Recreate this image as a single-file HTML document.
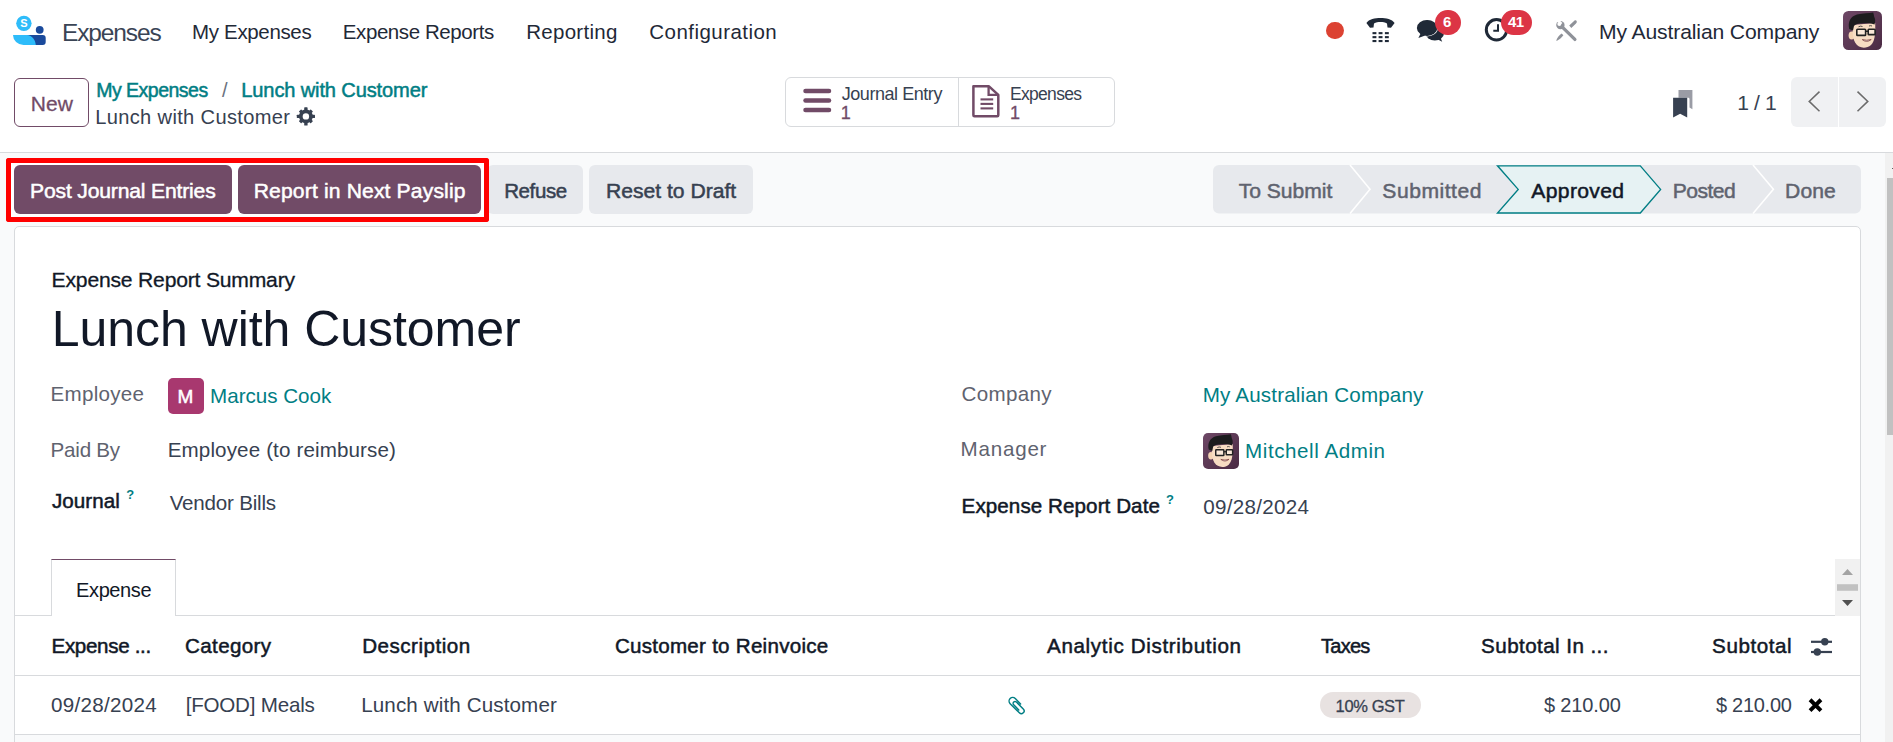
<!DOCTYPE html>
<html><head><meta charset="utf-8"><style>
html,body{margin:0;padding:0;}
body{width:1893px;height:742px;overflow:hidden;position:relative;background:#f9fafb;font-family:"Liberation Sans",sans-serif;}
.t{position:absolute;white-space:pre;line-height:1;font-family:"Liberation Sans",sans-serif;}
.a{position:absolute;box-sizing:border-box;}
</style></head><body>
<!-- top white area -->
<div class="a" style="left:0;top:0;width:1893px;height:152px;background:#fff"></div>
<div class="a" style="left:0;top:152px;width:1893px;height:1px;background:#d8dadd"></div>
<!-- logo -->
<svg class="a" style="left:0;top:0" width="60" height="60" viewBox="0 0 60 60">
 <circle cx="23.9" cy="23.35" r="7.7" fill="#2ebcfa"/>
 <text x="23.9" y="27.4" font-family="Liberation Sans" font-weight="700" font-size="11" fill="#fff" text-anchor="middle">S</text>
 <circle cx="39.7" cy="29.8" r="3.9" fill="#1a4a9c"/>
 <path d="M13,35 H37 V45 H23.5 A10.5,10 0 0 1 13,35 Z" fill="#2ebcfa"/>
 <path d="M27,35 H42.7 A3,3 0 0 1 45.7,38 V42 A3,3 0 0 1 42.7,45 H35.8 C35.5,40 32,35.2 27,35 Z" fill="#1a4a9c"/>
</svg>
<!-- red dot -->
<div class="a" style="left:1326.3px;top:21.5px;width:17.6px;height:17.6px;border-radius:50%;background:#dc4232"></div>
<!-- phone -->
<svg class="a" style="left:1360px;top:10px" width="40" height="40" viewBox="0 0 40 40">
 <path d="M6.4,13 C9,9 15,8 20.5,8 C26,8 32,9 34.6,13 L31,17.8 L27.5,17.5 L27,13.5 C25,12.3 23,12 20.5,12 C18,12 16,12.3 14,13.5 L13.5,17.5 L10,17.8 Z" fill="#1f2937"/>
 <g fill="#1f2937">
  <rect x="12.5" y="22.1" width="3.9" height="2.1"/><rect x="18.6" y="22.1" width="3.9" height="2.1"/><rect x="24.9" y="22.1" width="3.9" height="2.1"/>
  <rect x="12.5" y="26.1" width="3.9" height="2.1"/><rect x="18.6" y="26.1" width="3.9" height="2.1"/><rect x="24.9" y="26.1" width="3.9" height="2.1"/>
  <rect x="12.5" y="30.0" width="3.9" height="2.1"/><rect x="18.6" y="30.0" width="3.9" height="2.1"/><rect x="24.9" y="30.0" width="3.9" height="2.1"/>
 </g>
</svg>
<!-- chat -->
<svg class="a" style="left:1410px;top:10px" width="40" height="40" viewBox="0 0 40 40">
 <ellipse cx="24.8" cy="22.8" rx="9.3" ry="7.6" fill="#1f2937"/>
 <path d="M26,28.5 L32.2,31.8 L30,26.5 Z" fill="#1f2937"/>
 <ellipse cx="17.1" cy="17.9" rx="10.2" ry="8" fill="#1f2937" stroke="#fff" stroke-width="1.3"/>
 <path d="M10.6,23.6 L8.4,28.1 L15.2,25.6 Z" fill="#1f2937"/>
 <ellipse cx="17.1" cy="17.9" rx="10.2" ry="8" fill="#1f2937"/>
</svg>
<div class="a" style="left:1435.2px;top:10px;width:25.6px;height:25.4px;border-radius:13px;background:#dc3545;border:0"></div>
<div class="t" style="left:1443px;top:13.5px;font-size:15px;font-weight:700;color:#fff">6</div>
<!-- clock -->
<svg class="a" style="left:1480px;top:10px" width="40" height="40" viewBox="0 0 40 40">
 <circle cx="16.5" cy="19.8" r="10.2" fill="none" stroke="#1f2937" stroke-width="3"/>
 <path d="M18,14.2 V20.8 H13.3" fill="none" stroke="#1f2937" stroke-width="2"/>
</svg>
<div class="a" style="left:1500.6px;top:10.2px;width:31.4px;height:25.3px;border-radius:13px;background:#dc3545"></div>
<div class="t" style="left:1508px;top:13.8px;font-size:15px;font-weight:700;color:#fff;letter-spacing:-0.5px">41</div>
<!-- tools -->
<svg class="a" style="left:1550px;top:15px" width="32" height="32" viewBox="0 0 32 32">
 <g fill="#8f9299" stroke="none">
  <circle cx="10.4" cy="10.1" r="4.2"/>
  <line x1="10.8" y1="10.6" x2="24.9" y2="24.4" stroke="#8f9299" stroke-width="3.3" stroke-linecap="round"/>
  <path d="M19.2,10.6 L24.3,5.8 C25.2,5 26.4,5.2 26.7,6.2 C27,7 26.6,7.8 26,8.4 L21.3,12.9 Z"/>
  <path d="M11.6,18.5 L13.4,20.2 C11.5,22.8 9,25 6.1,25.9 C7,22.9 9,20.4 11.6,18.5 Z"/>
 </g>
 <circle cx="9.3" cy="8.9" r="2.0" fill="#fff"/>
 <path d="M9.6,8.2 L6.5,5.1 L10.5,4.7 Z" fill="#fff"/>
 <rect x="8.4" y="4.6" width="2.6" height="5" fill="#fff" transform="rotate(-45 9.7 7.1)"/>
</svg>
<!-- company avatar -->
<svg class="a" style="left:1843px;top:11px" width="39" height="39" viewBox="0 0 39 39">
 <defs><linearGradient id="ag" x1="0" y1="0" x2="1" y2="1"><stop offset="0" stop-color="#6e4866"/><stop offset="1" stop-color="#4a2a43"/></linearGradient></defs>
 <rect width="39" height="39" rx="5.5" fill="url(#ag)"/>
 <ellipse cx="8.6" cy="24.6" rx="3" ry="4" fill="#f3d2b3"/>
 <path d="M9.6,14 C9.2,24 10,32 16,35.6 C19.5,37.4 24.5,37.2 28,34 C31.5,30.5 32.6,24 32.2,12 Z" fill="#f7dcc3"/>
 <path d="M6.2,18 C4.6,11 7.5,5.5 14,3.6 C20,2 26,2.2 30.2,1.4 C31,3.5 30.8,5.2 31.5,6.5 C32.5,8.5 32.3,11 31.5,13.5 C29,12.3 26,12 22,12.2 C17,12.5 13,12.2 11,15 L10,19.5 Z" fill="#1c1c1e"/>
 <rect x="13.8" y="18.2" width="8.8" height="6.2" rx="0.7" fill="#fff" fill-opacity="0.35" stroke="#222" stroke-width="1.6"/>
 <rect x="25.2" y="18.2" width="6.9" height="5.4" rx="0.7" fill="#fff" fill-opacity="0.35" stroke="#222" stroke-width="1.6"/>
 <path d="M22.6,20.3 H25.2" stroke="#222" stroke-width="1.4"/>
 <path d="M15.5,15.8 Q17.5,14.6 19.5,15.5 M26,15 Q27.5,14.3 29,15" stroke="#3a3a3a" stroke-width="0.9" fill="none"/>
 <path d="M19.3,28.6 Q23.8,32.2 28.2,28.5 Q23.8,30 19.3,28.6 Z" fill="#fff" stroke="#7a3b3b" stroke-width="0.8"/>
</svg>
<!-- New button -->
<div class="a" style="left:14px;top:78px;width:75px;height:49px;border:1px solid #714b67;border-radius:6px;background:#fff"></div>
<!-- gear -->
<svg class="a" style="left:296px;top:106px" width="20" height="21" viewBox="0 0 20 21">
 <g transform="translate(9.9,10.4)">
  <g fill="#374151">
   <circle r="6.9"/>
   <rect x="-1.7" y="-9.1" width="3.4" height="18.2" rx="0.6"/>
   <rect x="-1.7" y="-8.4" width="3.4" height="16.8" rx="0.6" transform="rotate(45)"/>
   <rect x="-1.7" y="-9.1" width="3.4" height="18.2" rx="0.6" transform="rotate(90)"/>
   <rect x="-1.7" y="-8.4" width="3.4" height="16.8" rx="0.6" transform="rotate(135)"/>
  </g>
  <circle r="3.2" fill="#fff"/>
 </g>
</svg>
<!-- stat buttons -->
<div class="a" style="left:785px;top:77px;width:330px;height:50px;border:1px solid #d8dadd;border-radius:6px;background:#fff"></div>
<div class="a" style="left:958px;top:78px;width:1px;height:48px;background:#d8dadd"></div>
<svg class="a" style="left:800px;top:85px" width="36" height="32" viewBox="0 0 36 32">
 <g stroke="#714b67" stroke-width="4.5" stroke-linecap="round">
  <line x1="5.5" y1="6.1" x2="29" y2="6.1"/><line x1="5.5" y1="15.5" x2="29" y2="15.5"/><line x1="5.5" y1="24.9" x2="29" y2="24.9"/>
 </g>
</svg>
<svg class="a" style="left:968px;top:82px" width="36" height="38" viewBox="0 0 36 38">
 <path d="M5.4,4.3 H21 L30.3,12.8 V33.2 C30.3,33.8 29.9,34.2 29.3,34.2 H6.4 C5.8,34.2 5.4,33.8 5.4,33.2 Z" fill="none" stroke="#714b67" stroke-width="2.5" stroke-linejoin="round"/>
 <path d="M20.6,4.5 V12.9 H30.1" fill="none" stroke="#714b67" stroke-width="2.3"/>
 <g stroke="#714b67" stroke-width="2.1"><line x1="12.5" y1="17.4" x2="25.2" y2="17.4"/><line x1="12.5" y1="21.9" x2="25.2" y2="21.9"/><line x1="12.5" y1="26.4" x2="25.2" y2="26.4"/></g>
</svg>
<!-- bookmark -->
<svg class="a" style="left:1670px;top:88px" width="26" height="32" viewBox="0 0 26 32">
 <path d="M8.5,2 H22.4 V21.3 L19.5,19.5 V11 C19.5,10 18.8,9.7 18,9.7 H8.5 Z" fill="#9a9ca5"/>
 <path d="M3.1,9.7 H17.2 V29.6 L10.15,25.8 L3.1,29.6 Z" fill="#374151"/>
</svg>
<!-- pager -->
<div class="a" style="left:1791px;top:77px;width:95px;height:50px;border-radius:6px;background:#f0f1f3"></div>
<div class="a" style="left:1838px;top:77px;width:1px;height:50px;background:#fff"></div>
<svg class="a" style="left:1800px;top:85px" width="80" height="34" viewBox="0 0 80 34">
 <path d="M19.5,6.6 L9.2,16.4 L19.5,26.2" fill="none" stroke="#6b6b6b" stroke-width="1.5"/>
 <path d="M57.5,6.6 L67.8,16.4 L57.5,26.2" fill="none" stroke="#6b6b6b" stroke-width="1.5"/>
</svg>
<!-- status buttons -->
<div class="a" style="left:6px;top:158px;width:483px;height:64px;border:5px solid #ff0000;border-radius:3px;background:#fff"></div>
<div class="a" style="left:487px;top:165px;width:96px;height:49px;border-radius:6px;background:#e7e9ed"></div>
<div class="a" style="left:6px;top:158px;width:483px;height:64px;border:5px solid #ff0000;border-radius:3px"></div>
<div class="a" style="left:14px;top:165px;width:218px;height:49px;border-radius:6px;background:#714b67"></div>
<div class="a" style="left:238px;top:165px;width:243px;height:49px;border-radius:6px;background:#714b67"></div>
<div class="a" style="left:589px;top:165px;width:164px;height:49px;border-radius:6px;background:#e7e9ed"></div>
<!-- statusbar -->
<svg class="a" style="left:1200px;top:160px" width="670" height="60" viewBox="0 0 670 60">
 <rect x="13" y="5" width="648" height="48.5" rx="6" fill="#e7e9ed"/>
 <path d="M150,5 L170,29.2 L150,53.5" fill="none" stroke="#fff" stroke-width="1.6"/>
 <path d="M553,5 L573.4,29.2 L553,53.5" fill="none" stroke="#fff" stroke-width="1.6"/>
 <path d="M297.5,5.8 H440.3 L460.6,29.4 L440.3,53.0 H297.5 L318.2,29.4 Z" fill="#e6f2f3" stroke="#017e84" stroke-width="1.35"/>
</svg>
<!-- sheet -->
<div class="a" style="left:14px;top:226px;width:1847px;height:600px;border:1px solid #d8dadd;border-radius:5px;background:#fff"></div>
<!-- M avatar -->
<div class="a" style="left:168.3px;top:378.2px;width:35.6px;height:35.6px;border-radius:5px;background:#a8386f"></div>
<!-- Mitchell avatar -->
<svg class="a" style="left:1203px;top:433px" width="36" height="36" viewBox="0 0 39 39">
 <rect width="39" height="39" rx="5.5" fill="url(#ag)"/>
 <ellipse cx="8.6" cy="24.6" rx="3" ry="4" fill="#f3d2b3"/>
 <path d="M9.6,14 C9.2,24 10,32 16,35.6 C19.5,37.4 24.5,37.2 28,34 C31.5,30.5 32.6,24 32.2,12 Z" fill="#f7dcc3"/>
 <path d="M6.2,18 C4.6,11 7.5,5.5 14,3.6 C20,2 26,2.2 30.2,1.4 C31,3.5 30.8,5.2 31.5,6.5 C32.5,8.5 32.3,11 31.5,13.5 C29,12.3 26,12 22,12.2 C17,12.5 13,12.2 11,15 L10,19.5 Z" fill="#1c1c1e"/>
 <rect x="13.8" y="18.2" width="8.8" height="6.2" rx="0.7" fill="#fff" fill-opacity="0.35" stroke="#222" stroke-width="1.6"/>
 <rect x="25.2" y="18.2" width="6.9" height="5.4" rx="0.7" fill="#fff" fill-opacity="0.35" stroke="#222" stroke-width="1.6"/>
 <path d="M22.6,20.3 H25.2" stroke="#222" stroke-width="1.4"/>
 <path d="M15.5,15.8 Q17.5,14.6 19.5,15.5 M26,15 Q27.5,14.3 29,15" stroke="#3a3a3a" stroke-width="0.9" fill="none"/>
 <path d="M19.3,28.6 Q23.8,32.2 28.2,28.5 Q23.8,30 19.3,28.6 Z" fill="#fff" stroke="#7a3b3b" stroke-width="0.8"/>
</svg>
<!-- notebook -->
<div class="a" style="left:15px;top:615px;width:1820px;height:1px;background:#d8dadd"></div>
<div class="a" style="left:51px;top:559px;width:125px;height:57px;border:1px solid #d8dadd;border-top-color:#714b67;border-bottom:0;background:#fff"></div>
<div class="a" style="left:1835px;top:559px;width:25px;height:57px;background:#f1f1f1"></div>
<svg class="a" style="left:1835px;top:559px" width="25" height="57" viewBox="0 0 25 57">
 <path d="M7,16 L12.5,10 L18,16 Z" fill="#a3a3a3"/>
 <rect x="2" y="25.2" width="21" height="6.6" fill="#c1c1c1"/>
 <path d="M7,41 L12.5,47 L18,41 Z" fill="#505050"/>
</svg>
<!-- table -->
<div class="a" style="left:15px;top:675px;width:1845px;height:1px;background:#d8dadd"></div>
<div class="a" style="left:15px;top:734px;width:1845px;height:1px;background:#d8dadd"></div>
<div class="a" style="left:15px;top:735px;width:1845px;height:10px;background:#f9fafb"></div>
<svg class="a" style="left:1805px;top:635px" width="32" height="25" viewBox="0 0 32 25">
 <g stroke="#374151" stroke-width="2.2"><line x1="6" y1="6.8" x2="27" y2="6.8"/><line x1="6" y1="17" x2="27" y2="17"/></g>
 <circle cx="19.8" cy="6.8" r="3.7" fill="#374151"/><circle cx="12.3" cy="17" r="3.7" fill="#374151"/>
</svg>
<svg class="a" style="left:1004.7px;top:693.6px" width="24" height="24" viewBox="0 0 24 24">
 <g transform="translate(12.3,11.7) rotate(-45) scale(0.88)">
 <path d="M4.1,1.2 V-7.4 A4.1,4.1 0 0 0 -4.1,-7.4 V7.4 A3.15,3.15 0 0 0 2.2,7.4 V-3.6 A2.2,2.2 0 0 0 -2.2,-3.6 V4.6" fill="none" stroke="#017e84" stroke-width="1.65" stroke-linecap="round"/>
 </g>
</svg>
<div class="a" style="left:1320px;top:692px;width:100.7px;height:25.5px;border-radius:13px;background:#e8e2e1"></div>
<svg class="a" style="left:1805px;top:695px" width="22" height="22" viewBox="0 0 22 22">
 <path d="M5.05,4.75 L15.95,15.65 M15.95,4.75 L5.05,15.65" stroke="#000" stroke-width="3.9" stroke-linecap="butt"/>
</svg>
<!-- page scrollbar -->
<div class="a" style="left:1885px;top:153px;width:8px;height:589px;background:#f1f1f1"></div>
<div class="a" style="left:1887px;top:178px;width:6px;height:257px;background:#c1c1c1"></div>
<div class="a" style="left:1891.6px;top:167.6px;width:1.4px;height:1.3px;background:#606060"></div>

<div class="t" style="left:62.00px;top:21px;font-size:24.5px;font-weight:400;color:#3a4455;letter-spacing:-1.129px">Expenses</div>
<div class="t" style="left:192.10px;top:22px;font-size:20.5px;font-weight:400;color:#1f2937;letter-spacing:-0.350px">My Expenses</div>
<div class="t" style="left:342.80px;top:22px;font-size:20.5px;font-weight:400;color:#1f2937;letter-spacing:-0.414px">Expense Reports</div>
<div class="t" style="left:526.20px;top:22px;font-size:20.5px;font-weight:400;color:#1f2937;letter-spacing:0.287px">Reporting</div>
<div class="t" style="left:649.30px;top:22px;font-size:20.5px;font-weight:400;color:#1f2937;letter-spacing:0.458px">Configuration</div>
<div class="t" style="left:1599.10px;top:21px;font-size:21.12px;font-weight:400;color:#1f2937;letter-spacing:-0.130px">My Australian Company</div>
<div class="t" style="left:30.70px;top:93px;font-size:21px;font-weight:400;-webkit-text-stroke:0.3px currentColor;color:#714b67;letter-spacing:0.050px">New</div>
<div class="t" style="left:96.20px;top:81px;font-size:19.5px;font-weight:400;-webkit-text-stroke:0.5px currentColor;color:#017e84;letter-spacing:-0.510px">My Expenses</div>
<div class="t" style="left:222.00px;top:80px;font-size:20.09px;font-weight:400;color:#6b7280;letter-spacing:0.000px">/</div>
<div class="t" style="left:241.30px;top:80px;font-size:20.09px;font-weight:400;-webkit-text-stroke:0.5px currentColor;color:#017e84;letter-spacing:-0.139px">Lunch with Customer</div>
<div class="t" style="left:95.20px;top:107px;font-size:20.09px;font-weight:400;color:#374151;letter-spacing:0.344px">Lunch with Customer</div>
<div class="t" style="left:841.70px;top:85px;font-size:18.03px;font-weight:400;color:#374151;letter-spacing:-0.450px">Journal Entry</div>
<div class="t" style="left:840.70px;top:104px;font-size:18.03px;font-weight:400;-webkit-text-stroke:0.3px currentColor;color:#714b67;letter-spacing:0.000px">1</div>
<div class="t" style="left:1009.90px;top:86px;font-size:17.5px;font-weight:400;color:#374151;letter-spacing:-0.671px">Expenses</div>
<div class="t" style="left:1009.90px;top:104px;font-size:18.03px;font-weight:400;-webkit-text-stroke:0.3px currentColor;color:#714b67;letter-spacing:0.000px">1</div>
<div class="t" style="left:1737.30px;top:92px;font-size:21.12px;font-weight:400;color:#374151;letter-spacing:-0.425px">1 / 1</div>
<div class="t" style="left:30.10px;top:180px;font-size:21.12px;font-weight:400;-webkit-text-stroke:0.5px currentColor;color:#ffffff;letter-spacing:-0.174px">Post Journal Entries</div>
<div class="t" style="left:253.70px;top:180px;font-size:21.12px;font-weight:400;-webkit-text-stroke:0.5px currentColor;color:#ffffff;letter-spacing:0.143px">Report in Next Payslip</div>
<div class="t" style="left:504.20px;top:181px;font-size:20.5px;font-weight:400;-webkit-text-stroke:0.5px currentColor;color:#374151;letter-spacing:-0.400px">Refuse</div>
<div class="t" style="left:606.00px;top:180px;font-size:21.12px;font-weight:400;-webkit-text-stroke:0.5px currentColor;color:#374151;letter-spacing:0.000px">Reset to Draft</div>
<div class="t" style="left:1238.70px;top:180px;font-size:21.12px;font-weight:400;-webkit-text-stroke:0.5px currentColor;color:#5f636f;letter-spacing:-0.025px">To Submit</div>
<div class="t" style="left:1382.30px;top:180px;font-size:21.12px;font-weight:400;-webkit-text-stroke:0.5px currentColor;color:#5f636f;letter-spacing:0.512px">Submitted</div>
<div class="t" style="left:1531.30px;top:180px;font-size:21.12px;font-weight:400;-webkit-text-stroke:0.5px currentColor;color:#111827;letter-spacing:0.343px">Approved</div>
<div class="t" style="left:1672.70px;top:180px;font-size:21.12px;font-weight:400;-webkit-text-stroke:0.5px currentColor;color:#5f636f;letter-spacing:-0.540px">Posted</div>
<div class="t" style="left:1785.10px;top:180px;font-size:21.12px;font-weight:400;-webkit-text-stroke:0.5px currentColor;color:#5f636f;letter-spacing:0.100px">Done</div>
<div class="t" style="left:51.60px;top:269px;font-size:21.12px;font-weight:400;-webkit-text-stroke:0.3px currentColor;color:#111827;letter-spacing:-0.195px">Expense Report Summary</div>
<div class="t" style="left:51.80px;top:304px;font-size:50px;font-weight:400;color:#111827;letter-spacing:-0.050px">Lunch with Customer</div>
<div class="t" style="left:50.60px;top:384px;font-size:20.6px;font-weight:400;color:#5f636f;letter-spacing:0.243px">Employee</div>
<div class="t" style="left:210.10px;top:386px;font-size:20.6px;font-weight:400;color:#017e84;letter-spacing:-0.020px">Marcus Cook</div>
<div class="t" style="left:50.60px;top:440px;font-size:20.6px;font-weight:400;color:#5f636f;letter-spacing:-0.233px">Paid By</div>
<div class="t" style="left:167.70px;top:440px;font-size:20.6px;font-weight:400;color:#374151;letter-spacing:0.127px">Employee (to reimburse)</div>
<div class="t" style="left:51.90px;top:491px;font-size:20.6px;font-weight:400;-webkit-text-stroke:0.5px currentColor;color:#111827;letter-spacing:0.050px">Journal</div>
<div class="t" style="left:169.70px;top:493px;font-size:20.6px;font-weight:400;color:#374151;letter-spacing:-0.218px">Vendor Bills</div>
<div class="t" style="left:961.60px;top:384px;font-size:20.6px;font-weight:400;color:#5f636f;letter-spacing:0.317px">Company</div>
<div class="t" style="left:1202.80px;top:385px;font-size:20.6px;font-weight:400;color:#017e84;letter-spacing:0.155px">My Australian Company</div>
<div class="t" style="left:960.60px;top:439px;font-size:20.6px;font-weight:400;color:#5f636f;letter-spacing:0.767px">Manager</div>
<div class="t" style="left:1245.10px;top:441px;font-size:20.6px;font-weight:400;color:#017e84;letter-spacing:0.554px">Mitchell Admin</div>
<div class="t" style="left:961.60px;top:496px;font-size:20.6px;font-weight:400;-webkit-text-stroke:0.5px currentColor;color:#111827;letter-spacing:0.078px">Expense Report Date</div>
<div class="t" style="left:1203.30px;top:497px;font-size:20.6px;font-weight:400;color:#374151;letter-spacing:0.300px">09/28/2024</div>
<div class="t" style="left:76.10px;top:580px;font-size:20px;font-weight:400;color:#111827;letter-spacing:-0.400px">Expense</div>
<div class="t" style="left:126.30px;top:488px;font-size:13px;font-weight:700;color:#017e84;letter-spacing:0.000px">?</div>
<div class="t" style="left:1166.10px;top:493px;font-size:13px;font-weight:700;color:#017e84;letter-spacing:0.000px">?</div>
<div class="t" style="left:177.50px;top:387px;font-size:19px;font-weight:400;-webkit-text-stroke:0.5px currentColor;color:#ffffff;letter-spacing:0.000px">M</div>
<div class="t" style="left:51.50px;top:636px;font-size:20.6px;font-weight:400;-webkit-text-stroke:0.5px currentColor;color:#111827;letter-spacing:-0.330px">Expense ...</div>
<div class="t" style="left:185.10px;top:636px;font-size:20.6px;font-weight:400;-webkit-text-stroke:0.5px currentColor;color:#111827;letter-spacing:0.343px">Category</div>
<div class="t" style="left:362.20px;top:636px;font-size:20.6px;font-weight:400;-webkit-text-stroke:0.5px currentColor;color:#111827;letter-spacing:0.500px">Description</div>
<div class="t" style="left:614.90px;top:636px;font-size:20.6px;font-weight:400;-webkit-text-stroke:0.5px currentColor;color:#111827;letter-spacing:0.250px">Customer to Reinvoice</div>
<div class="t" style="left:1047.00px;top:636px;font-size:20.6px;font-weight:400;-webkit-text-stroke:0.5px currentColor;color:#111827;letter-spacing:0.655px">Analytic Distribution</div>
<div class="t" style="left:1321.10px;top:636px;font-size:20px;font-weight:400;-webkit-text-stroke:0.5px currentColor;color:#111827;letter-spacing:-0.750px">Taxes</div>
<div class="t" style="left:1481.10px;top:636px;font-size:20.6px;font-weight:400;-webkit-text-stroke:0.5px currentColor;color:#111827;letter-spacing:0.429px">Subtotal In ...</div>
<div class="t" style="left:1712.10px;top:636px;font-size:20.6px;font-weight:400;-webkit-text-stroke:0.5px currentColor;color:#111827;letter-spacing:0.557px">Subtotal</div>
<div class="t" style="left:50.90px;top:695px;font-size:20.6px;font-weight:400;color:#374151;letter-spacing:0.311px">09/28/2024</div>
<div class="t" style="left:185.70px;top:695px;font-size:20.6px;font-weight:400;color:#374151;letter-spacing:-0.227px">[FOOD] Meals</div>
<div class="t" style="left:361.20px;top:695px;font-size:20.6px;font-weight:400;color:#374151;letter-spacing:0.122px">Lunch with Customer</div>
<div class="t" style="left:1335.60px;top:698px;font-size:16.5px;font-weight:400;-webkit-text-stroke:0.3px currentColor;color:#374151;letter-spacing:-0.383px">10% GST</div>
<div class="t" style="left:1543.90px;top:695px;font-size:20px;font-weight:400;color:#374151;letter-spacing:-0.129px">$ 210.00</div>
<div class="t" style="left:1716.00px;top:695px;font-size:20px;font-weight:400;color:#374151;letter-spacing:-0.286px">$ 210.00</div>
</body></html>
